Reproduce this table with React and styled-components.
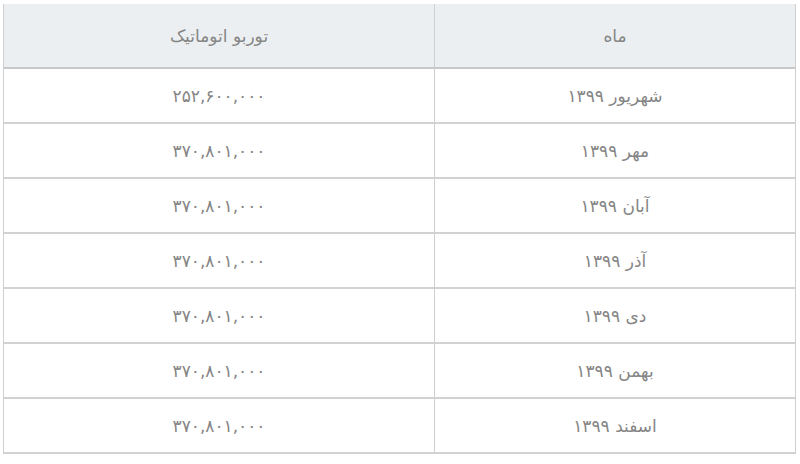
import React from "react";
import styled, { createGlobalStyle } from "styled-components";

const Global = createGlobalStyle`
  html, body { margin: 0; padding: 0; background: #ffffff; }
  body { font-family: "DejaVu Sans", "Noto Sans", sans-serif; }
`;

const Wrap = styled.div`
  width: 800px;
  height: 464px;
  box-sizing: border-box;
  padding: 4px 4px 0 3px;
  background: #ffffff;
`;

const Table = styled.table`
  width: 793px;
  border-collapse: separate;
  border-spacing: 0;
  table-layout: fixed;
  direction: rtl;
  border-left: 1px solid #cfcfcf;
  border-right: 1px solid #cfcfcf;
`;

const Cell = styled.td`
  box-sizing: border-box;
  height: ${(p) => (p.$head ? 65 : 55)}px;
  padding: 0 8px;
  text-align: center;
  vertical-align: middle;
  font-size: 17px;
  font-weight: 400;
  color: #858585;
  background: ${(p) => (p.$head ? "#eceff1" : "#ffffff")};
  border-bottom: 2px solid ${(p) => (p.$head ? "#c6c8ca" : "#d2d2d2")};
  border-left: ${(p) => (p.$first ? "1px solid #cfcfcf" : "none")};
`;

const rows = [
  ["شهریور ۱۳۹۹", "۲۵۲,۶۰۰,۰۰۰"],
  ["مهر ۱۳۹۹", "۳۷۰,۸۰۱,۰۰۰"],
  ["آبان ۱۳۹۹", "۳۷۰,۸۰۱,۰۰۰"],
  ["آذر ۱۳۹۹", "۳۷۰,۸۰۱,۰۰۰"],
  ["دی ۱۳۹۹", "۳۷۰,۸۰۱,۰۰۰"],
  ["بهمن ۱۳۹۹", "۳۷۰,۸۰۱,۰۰۰"],
  ["اسفند ۱۳۹۹", "۳۷۰,۸۰۱,۰۰۰"],
];

export default function App() {
  return (
    <Wrap>
      <Global />
      <Table dir="rtl">
        <colgroup>
          <col style={{ width: "361px" }} />
          <col />
        </colgroup>
        <thead>
          <tr>
            <Cell as="th" $head $first>ماه</Cell>
            <Cell as="th" $head>توربو اتوماتیک</Cell>
          </tr>
        </thead>
        <tbody>
          {rows.map(([m, v]) => (
            <tr key={m}>
              <Cell $first>{m}</Cell>
              <Cell>{v}</Cell>
            </tr>
          ))}
        </tbody>
      </Table>
    </Wrap>
  );
}
